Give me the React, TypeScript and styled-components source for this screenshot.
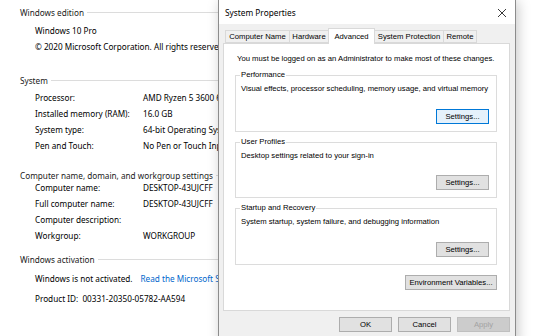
import React from 'react'
import styled, { createGlobalStyle } from 'styled-components'

const GlobalStyle = createGlobalStyle`
    html, body {
        margin: 0;
        padding: 0;
        background: #ffffff;
    }
    * {
        box-sizing: border-box;
    }
`

const Desktop = styled.div`
    position: relative;
    width: 560px;
    height: 336px;
    overflow: hidden;
    background: #ffffff;
`

/* ---- the "About" page behind the dialog ---- */

const Page = styled.div`
    padding: 5px 0 0 20px;
    width: 400px;
    font-family: "Noto Sans", "Open Sans", sans-serif;
    font-size: 8.2px;
    color: #000;
`

const Section = styled.section<{ $top: number }>`
    margin-top: ${p => p.$top}px;
`

const SectionHead = styled.div<{ $gap: number }>`
    display: flex;
    align-items: center;
    height: 14px;
    margin-bottom: ${p => p.$gap}px;
    color: #1a1a1a;
    white-space: nowrap;
    &::after {
        content: '';
        flex: 1;
        height: 1px;
        margin-left: 3px;
        margin-top: 1px;
        background: #dcdcdc;
    }
`

const Row = styled.div<{ $h?: number }>`
    display: grid;
    grid-template-columns: 108px 1fr;
    height: ${p => p.$h ?? 16}px;
    align-items: center;
    padding-left: 15px;
    white-space: nowrap;
`

const Line = styled.div<{ $h?: number }>`
    display: flex;
    align-items: center;
    gap: 8px;
    height: ${p => p.$h ?? 16}px;
    padding-left: 15px;
    white-space: nowrap;
`

const Link = styled.span`
    color: #0066cc;
`

/* ---- System Properties dialog ---- */

const Dialog = styled.div`
    position: absolute;
    left: 218px;
    top: -1px;
    width: 298px;
    height: 345px;
    display: flex;
    flex-direction: column;
    border: 1px solid #8c8c8c;
    background: #f0f0f0;
    box-shadow: 2px 2px 12px rgba(0, 0, 0, 0.22);
    font-family: "Liberation Sans", Arial, sans-serif;
    font-size: 7.7px;
    color: #000;
`

const TitleBar = styled.div`
    display: flex;
    align-items: center;
    justify-content: space-between;
    height: 24px;
    padding: 1px 6px 0 6px;
    background: #ffffff;
    font-family: "Noto Sans", "Open Sans", sans-serif;
    font-size: 8.3px;
`

const CloseIcon = styled.svg`
    width: 10px;
    height: 10px;
    margin-right: 2px;
`

const Body = styled.div`
    display: flex;
    flex-direction: column;
    padding: 4px 5px 0 4px;
`

const TabStrip = styled.div`
    display: flex;
    align-items: flex-end;
    height: 15px;
    padding-left: 2px;
`

const Tab = styled.div<{ $active?: boolean; $w: number }>`
    display: flex;
    align-items: center;
    justify-content: center;
    width: ${p => p.$w}px;
    height: ${p => (p.$active ? 16 : 13)}px;
    margin-bottom: ${p => (p.$active ? -1 : 0)}px;
    margin-right: -1px;
    border: 1px solid #d9d9d9;
    border-bottom: ${p => (p.$active ? 'none' : '1px solid #d9d9d9')};
    background: ${p => (p.$active ? '#ffffff' : '#f0f0f0')};
    position: relative;
    z-index: ${p => (p.$active ? 1 : 0)};
    white-space: nowrap;
`

const Panel = styled.div`
    display: flex;
    flex-direction: column;
    height: 268px;
    padding: 0 12px 0 11px;
    border: 1px solid #d9d9d9;
    background: #ffffff;
`

const Notice = styled.div`
    height: 12px;
    line-height: 12px;
    margin: 9px 0 0 2px;
    white-space: nowrap;
`

const Group = styled.div<{ $h: number; $top: number }>`
    position: relative;
    display: flex;
    flex-direction: column;
    height: ${p => p.$h}px;
    margin-top: ${p => p.$top}px;
    padding: 8px 7px 7px 5px;
    border: 1px solid #dcdcdc;
`

const Legend = styled.div`
    position: absolute;
    top: -6px;
    left: 4px;
    padding: 0 1px;
    line-height: 10px;
    background: #ffffff;
`

const GroupText = styled.div`
    line-height: 10px;
    white-space: nowrap;
`

const Button = styled.button<{ $focus?: boolean; $w?: number }>`
    width: ${p => p.$w ?? 53}px;
    height: 15px;
    padding: 0;
    font-family: inherit;
    font-size: inherit;
    color: ${p => (p.disabled ? '#a3a3a3' : '#000')};
    background: ${p => (p.$focus ? '#e5f1fb' : p.disabled ? '#cccccc' : '#e1e1e1')};
    border: 1px solid ${p => (p.$focus ? '#0078d7' : p.disabled ? '#bfbfbf' : '#adadad')};
    border-radius: 0;
`

const GroupActions = styled.div`
    display: flex;
    justify-content: flex-end;
    margin-top: auto;
`

const EnvRow = styled.div`
    display: flex;
    justify-content: flex-end;
    margin-top: 10px;
`

const Footer = styled.div`
    display: flex;
    justify-content: flex-end;
    gap: 6px;
    padding-top: 6px;
`

export default function App() {
    return (
        <Desktop>
            <GlobalStyle />
            <Page>
                <Section $top={0}>
                    <SectionHead $gap={3}>Windows edition</SectionHead>
                    <Line>Windows 10 Pro</Line>
                    <Line>© 2020 Microsoft Corporation. All rights reserved.</Line>
                </Section>
                <Section $top={19}>
                    <SectionHead $gap={2}>System</SectionHead>
                    <Row><span>Processor:</span><span>AMD Ryzen 5 3600 6-Core Processor</span></Row>
                    <Row><span>Installed memory (RAM):</span><span>16.0 GB</span></Row>
                    <Row><span>System type:</span><span>64-bit Operating System, x64-based processor</span></Row>
                    <Row><span>Pen and Touch:</span><span>No Pen or Touch Input is available for this Display</span></Row>
                </Section>
                <Section $top={15}>
                    <SectionHead $gap={-3}>Computer name, domain, and workgroup settings</SectionHead>
                    <Row><span>Computer name:</span><span>DESKTOP-43UJCFF</span></Row>
                    <Row><span>Full computer name:</span><span>DESKTOP-43UJCFF</span></Row>
                    <Row><span>Computer description:</span><span></span></Row>
                    <Row><span>Workgroup:</span><span>WORKGROUP</span></Row>
                </Section>
                <Section $top={9}>
                    <SectionHead $gap={4}>Windows activation</SectionHead>
                    <Line>
                        <span>Windows is not activated.</span>
                        <Link>Read the Microsoft Software License Terms</Link>
                    </Line>
                    <Line $h={24}>Product ID:&nbsp; 00331-20350-05782-AA594</Line>
                </Section>
            </Page>

            <Dialog>
                <TitleBar>
                    <span>System Properties</span>
                    <CloseIcon viewBox="0 0 10 10">
                        <path d="M1 1 L9 9 M9 1 L1 9" stroke="#222" strokeWidth="0.9" fill="none" />
                    </CloseIcon>
                </TitleBar>
                <Body>
                    <TabStrip>
                        <Tab $w={65}>Computer Name</Tab>
                        <Tab $w={40}>Hardware</Tab>
                        <Tab $w={47} $active>Advanced</Tab>
                        <Tab $w={70}>System Protection</Tab>
                        <Tab $w={34}>Remote</Tab>
                    </TabStrip>
                    <Panel>
                        <Notice>You must be logged on as an Administrator to make most of these changes.</Notice>
                        <Group $h={57} $top={10}>
                            <Legend>Performance</Legend>
                            <GroupText>Visual effects, processor scheduling, memory usage, and virtual memory</GroupText>
                            <GroupActions><Button $focus>Settings...</Button></GroupActions>
                        </Group>
                        <Group $h={56} $top={10}>
                            <Legend>User Profiles</Legend>
                            <GroupText>Desktop settings related to your sign-in</GroupText>
                            <GroupActions><Button>Settings...</Button></GroupActions>
                        </Group>
                        <Group $h={57} $top={10}>
                            <Legend>Startup and Recovery</Legend>
                            <GroupText>System startup, system failure, and debugging information</GroupText>
                            <GroupActions><Button>Settings...</Button></GroupActions>
                        </Group>
                        <EnvRow><Button $w={92}>Environment Variables...</Button></EnvRow>
                    </Panel>
                    <Footer>
                        <Button>OK</Button>
                        <Button>Cancel</Button>
                        <Button disabled>Apply</Button>
                    </Footer>
                </Body>
            </Dialog>
        </Desktop>
    )
}
